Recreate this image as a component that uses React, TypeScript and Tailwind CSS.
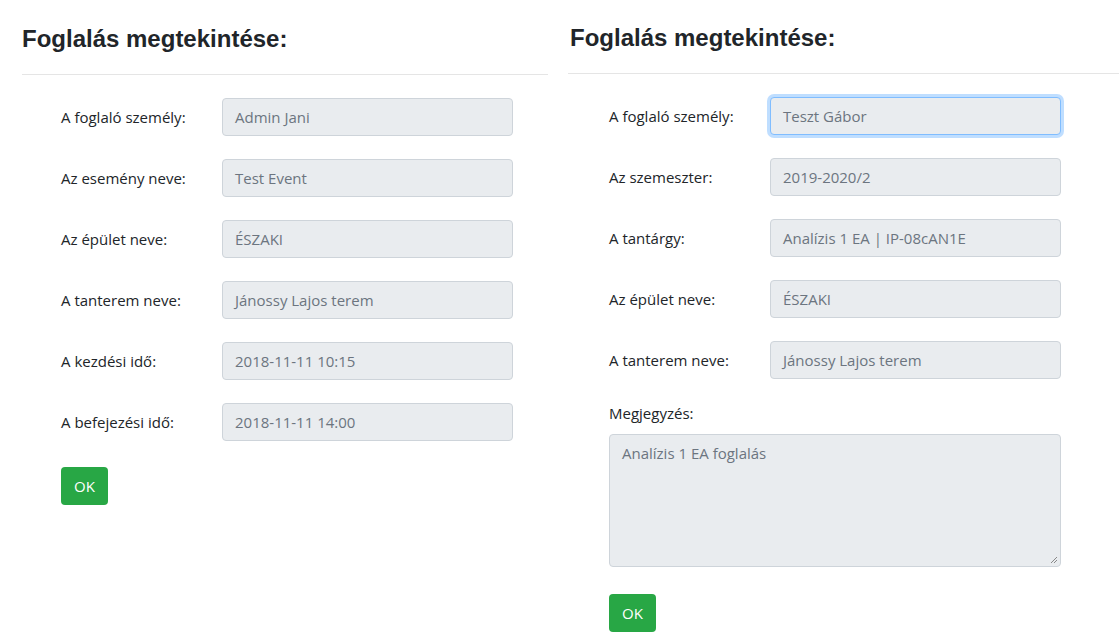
import React from "react";

const body = { fontFamily: '"Open Sans", "Noto Sans", sans-serif' };

function Field({ label, value, focused }: { label: string; value: string; focused?: boolean }) {
  return (
    <div className="flex items-center h-[38px]">
      <div className="w-[161px] shrink-0 text-[15px] text-[#212529]">{label}</div>
      <div
        className={
          "w-[291px] h-[38px] rounded-[4px] bg-[#e9ecef] border flex items-center px-[12px] text-[15px] text-[#6c7580] " +
          (focused ? "border-[#80bdff] shadow-[0_0_0_3px_rgba(0,123,255,0.25)]" : "border-[#ced4da]")
        }
      >
        {value}
      </div>
    </div>
  );
}

function Title() {
  return (
    <h2
      className="text-[24px] leading-[30px] font-bold text-[#212529]"
      style={{ fontFamily: '"Liberation Sans", Arial, sans-serif' }}
    >
      Foglalás megtekintése:
    </h2>
  );
}

function OkButton() {
  return (
    <button className="w-[47px] h-[38px] rounded-[4px] bg-[#28a745] text-white text-[15px]">OK</button>
  );
}

export default function App() {
  return (
    <div className="flex w-[1119px] h-[643px] bg-white overflow-hidden" style={body}>
      <div className="w-[548px] pl-[22px] pt-[24px] shrink-0">
        <Title />
        <div className="mt-[20px] h-px bg-[#e5e5e5]" />
        <div className="pl-[39px] pt-[23px] flex flex-col gap-[23px]">
          <Field label="A foglaló személy:" value="Admin Jani" />
          <Field label="Az esemény neve:" value="Test Event" />
          <Field label="Az épület neve:" value="ÉSZAKI" />
          <Field label="A tanterem neve:" value="Jánossy Lajos terem" />
          <Field label="A kezdési idő:" value="2018-11-11 10:15" />
          <Field label="A befejezési idő:" value="2018-11-11 14:00" />
          <div className="pt-[3px]">
            <OkButton />
          </div>
        </div>
      </div>
      <div className="flex-1 pl-[20px] pt-[23px]">
        <div className="pl-[2px]">
          <Title />
        </div>
        <div className="mt-[20px] h-px bg-[#e5e5e5]" />
        <div className="pl-[41px] pt-[23px] flex flex-col gap-[23px]">
          <Field label="A foglaló személy:" value="Teszt Gábor" focused />
          <Field label="Az szemeszter:" value="2019-2020/2" />
          <Field label="A tantárgy:" value="Analízis 1 EA | IP-08cAN1E" />
          <Field label="Az épület neve:" value="ÉSZAKI" />
          <Field label="A tanterem neve:" value="Jánossy Lajos terem" />
          <div className="flex flex-col">
            <div className="text-[15px] text-[#212529] leading-[22px]">Megjegyzés:</div>
            <div className="mt-[10px] w-[452px] h-[133px] rounded-[4px] bg-[#e9ecef] border border-[#ced4da] px-[12px] pt-[7px] text-[15px] text-[#6c7580] relative">
              Analízis 1 EA foglalás
              <svg className="absolute right-[2px] bottom-[2px]" width="8" height="8" viewBox="0 0 8 8">
                <path d="M7 1 L1 7 M7 4 L4 7" stroke="#888" strokeWidth="1" />
              </svg>
            </div>
          </div>
          <div className="pt-[4px]">
            <OkButton />
          </div>
        </div>
      </div>
    </div>
  );
}
